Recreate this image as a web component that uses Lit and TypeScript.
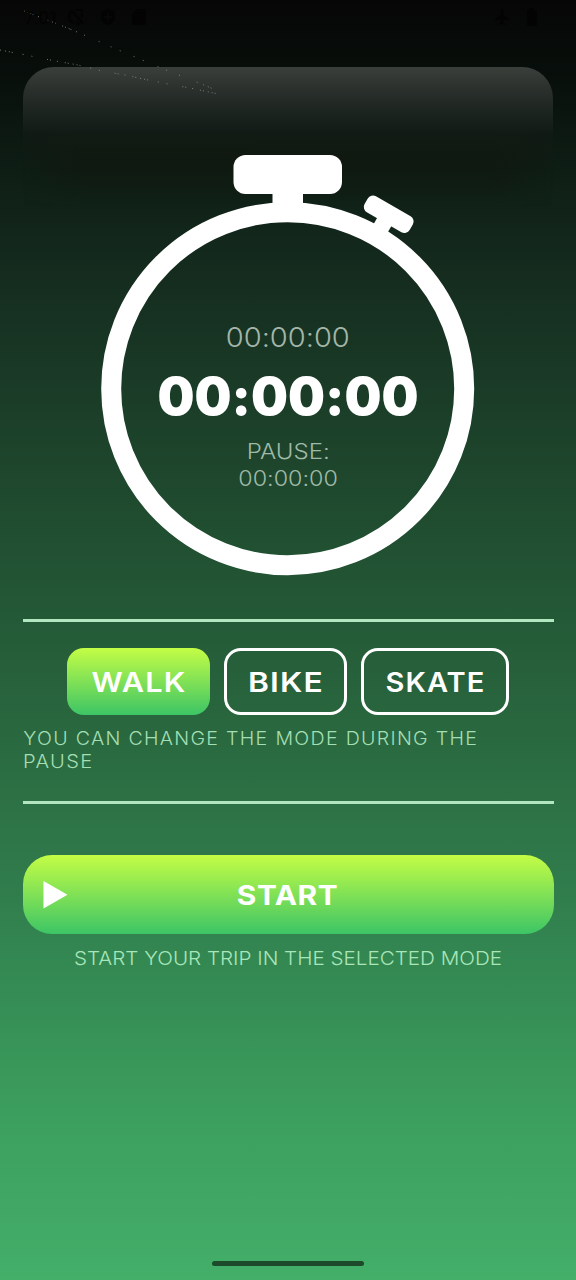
import { LitElement, html, svg, css } from "lit";
import { customElement, property } from "lit/decorators.js";

type Fitted = { t: string; x: number; y: number; w: number; c: string };

const fitted = (f: Fitted) => svg`<text class=${f.c} x=${f.x} y=${f.y}
  textLength=${f.w} lengthAdjust="spacingAndGlyphs">${f.t}</text>`;

const textStyles = css`
  text { font-family: Inter, "Open Sans", sans-serif; fill: #fff; font-feature-settings: "calt" 0, "case" 0; }
  .mode { font-size: 27px; font-weight: 600; letter-spacing: 1px; }
  .start { font-size: 27px; font-weight: 700; letter-spacing: 0.5px; }
  .hint { font-size: 18px; font-weight: 300; letter-spacing: 1.2px; fill: #a4dfb4; }
  .sub { font-size: 19.2px; font-weight: 300; fill: #a9e6ba; }
  .total { font-size: 26.8px; font-weight: 300; fill: #a3b6a9; }
  .main { font-size: 52.5px; font-weight: 900; }
  .pause { font-size: 21.2px; font-weight: 300; fill: #9fbaa7; }
`;

@customElement("status-bar")
class StatusBar extends LitElement {
  static styles = css`
    :host { display: flex; align-items: center; height: 34px; padding: 0 38px 0 24px; color: #030303; }
    .time { font: 18px Roboto, sans-serif; width: 44px; }
    .left { display: flex; gap: 13px; flex: 1; }
    .right { display: flex; gap: 11px; }
    svg { display: block; fill: currentColor; }
    .outline { fill: none; stroke: currentColor; stroke-width: 2; }
  `;
  render() {
    return html`
      <span class="time">7:01</span>
      <div class="left">
        <svg width="18" height="18" viewBox="0 0 18 18"><path class="outline" d="M4 2.500A7 7 0 0 0 6 15M7 2h7v8M3 2l12 13M9 12v5l4-3"/></svg>
        <svg width="18" height="18" viewBox="0 0 18 18"><path fill-rule="evenodd" d="M9 1l7 3v5c0 4-3 7-7 8-4-1-7-4-7-8V4zM8 5v3H5v2h3v3h2v-3h3V8h-3V5z"/></svg>
        <svg width="18" height="18" viewBox="0 0 18 18"><path d="M7 1h8a1 1 0 0 1 1 1v14a1 1 0 0 1-1 1H3a1 1 0 0 1-1-1V6z"/></svg>
      </div>
      <div class="right">
        <svg width="22" height="18" viewBox="-1 0 22 18"><path d="M8 1q1.300 0 1.300 2v4L15 11v1.500L9.300 11v3.500l2 1.500v1L8 16l-3.300 1v-1l2-1.500V11L1 12.500V11l5.700-4V3Q6.700 1 8 1z"/></svg>
        <svg width="12" height="18" viewBox="0 0 12 18"><path d="M1 2h2V0h5v2h3v16H1z"/></svg>
      </div>`;
  }
}

@customElement("stop-watch")
class StopWatch extends LitElement {
  static styles = [textStyles, css`
    :host { display: block; }
    svg { display: block; }
    .metal { fill: #fff; }
    .ring { fill: none; stroke: #fff; stroke-width: 20; }
  `];
  render() {
    const labels: Fitted[] = [
      { t: "00:00:00", x: 225.8, y: 347, w: 124, c: "total" },
      { t: "00:00:00", x: 157.5, y: 414.5, w: 261, c: "main" },
      { t: "PAUSE:", x: 246.8, y: 459.3, w: 83, c: "pause" },
      { t: "00:00:00", x: 238.3, y: 486, w: 99.5, c: "pause" },
    ];
    return html`<svg width="576" height="426" viewBox="0 150 576 426">
      <rect class="metal" x="233.500" y="155" width="108.500" height="39" rx="12"/>
      <rect class="metal" x="272.500" y="190" width="30.500" height="22"/>
      <g transform="translate(388.700 214.300) rotate(30)" class="metal">
        <rect x="-26" y="-9.200" width="52" height="18.400" rx="6"/>
        <rect x="-8.200" y="5" width="16.400" height="16"/>
      </g>
      <circle class="ring" cx="287.700" cy="388.700" r="176.500"/>
      ${labels.map(fitted)}
    </svg>`;
  }
}

@customElement("mode-button")
class ModeButton extends LitElement {
  @property() label = "";
  @property({ type: Number }) width = 120;
  @property({ type: Number }) text = 80;
  @property({ type: Boolean, reflect: true }) selected = false;
  static styles = [textStyles, css`
    :host { display: block; box-sizing: border-box; height: 67px; border: 3px solid #fff; border-radius: 17px; }
    :host([selected]) { border: 0; padding: 3px; background: linear-gradient(#c4fd45, #3dc566); }
    svg { display: block; }
  `];
  render() {
    const inner = this.width - 6;
    return html`<svg width=${inner} height="61">
      ${fitted({ t: this.label, x: (inner - this.text) / 2 + 0.5, y: 41, w: this.text, c: "mode" })}
    </svg>`;
  }
}

@customElement("app-root")
class AppRoot extends LitElement {
  static styles = [textStyles, css`
    :host {
      display: flex; flex-direction: column; position: relative; box-sizing: border-box;
      width: 576px; height: 1280px; overflow: hidden;
      background: linear-gradient(#060606 0, #070c09 55px, #0c1a12 145px, #13271c 240px, #1b3d28 400px,
        #235735 600px, #2b6d42 770px, #307b4b 880px, #348a53 975px, #3c9f5e 1120px, #43af69 1280px);
    }
    .glow, .shade { position: absolute; left: 23px; top: 67px; width: 530px; }
    .glow {
      height: 100px; border-radius: 31px 31px 0 0;
      background: linear-gradient(#3b3f3c 0, #2b302d 22px, #1c2420 46px, rgba(18,27,21,.8) 66px, rgba(16,26,18,0) 100px);
    }
    .shade {
      height: 140px;
      background: linear-gradient(transparent 40px, #10180f 85px, rgba(16,24,15,.7) 100px, transparent 140px);
      -webkit-mask-image: linear-gradient(90deg, transparent, #000 60px, #000 470px, transparent);
      mask-image: linear-gradient(90deg, transparent, #000 60px, #000 470px, transparent);
    }
    .dust { position: absolute; left: 0; top: 0; fill: none; stroke: #8d958f; stroke-width: .8; }
    status-bar { position: relative; }
    stop-watch { margin-top: 116px; position: relative; }
    .panel { display: flex; flex-direction: column; margin: 42.500px 22.500px 0; }
    .rule { height: 3px; background: #b2e6c0; }
    .modes { display: flex; gap: 14px; justify-content: center; margin-top: 26.500px; }
    svg { display: block; }
    .action { margin: 51px 22.500px 0; height: 78.500px; border-radius: 29px; background: linear-gradient(#c4fd45, #3dc566); }
    .home { width: 152px; height: 5px; border-radius: 3px; background: #1d4a2b; margin: auto auto 14px; }
  `];
  render() {
    return html`
      <div class="shade"></div>
      <div class="glow"></div>
      <svg class="dust" width="240" height="110">
        <path stroke-dasharray="1 2 1 3 1 1 1 5 1 9 1 4 1 2 1 7" d="M24 11L60 25 82 34"/>
        <path stroke-dasharray="1 15 1 12 1 9 1 14 1 9" d="M84 35L123 52 166 70"/>
        <path stroke-dasharray="1 13 1 18 1 6 1 4 1 2" d="M166 70L199 83 223 93"/>
        <path stroke-dasharray="1 4 1 3 1 2 1 10 1 8 1 15 1 2 1 6 1 7 1 2" d="M0 50L26 55 50 60 78 65 102 71 125 75 148 80 168 84 190 88 223 95"/>
      </svg>
      <status-bar></status-bar>
      <stop-watch></stop-watch>
      <div class="panel">
        <div class="rule"></div>
        <div class="modes">
          <mode-button selected label="WALK" width="143" text="95" style="width:143px"></mode-button>
          <mode-button label="BIKE" width="123" text="76" style="width:123px"></mode-button>
          <mode-button label="SKATE" width="148" text="100" style="width:148px"></mode-button>
        </div>
        <svg width="531" height="86">
          ${fitted({ t: "YOU CAN CHANGE THE MODE DURING THE", x: 0.3, y: 30, w: 455, c: "hint" })}
          ${fitted({ t: "PAUSE", x: 0, y: 53, w: 70.5, c: "hint" })}
        </svg>
        <div class="rule"></div>
      </div>
      <div class="action">
        <svg width="531" height="78">
          <path d="M20.500 26L44.500 39.800 20.500 53.500z" fill="#fff"/>
          ${fitted({ t: "START", x: 213.8, y: 49.5, w: 101.5, c: "start" })}
        </svg>
      </div>
      <svg width="576" height="50">
        ${fitted({ t: "START YOUR TRIP IN THE SELECTED MODE", x: 74, y: 31, w: 428, c: "sub" })}
      </svg>
      <div class="home"></div>`;
  }
}
